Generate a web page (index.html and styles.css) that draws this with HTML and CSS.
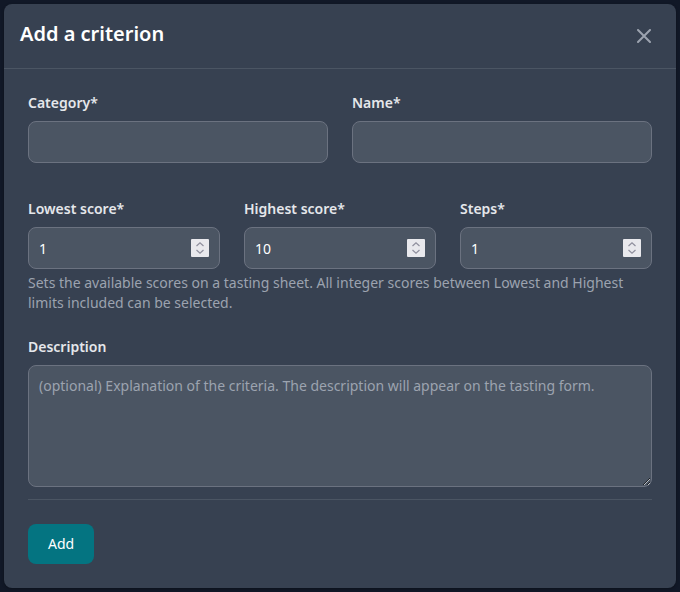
FILE: index.html
```html
<!DOCTYPE html>
<html lang="en">
<head>
<meta charset="utf-8">
<title>Add a criterion</title>
<link rel="stylesheet" href="styles.css">
</head>
<body>
<div class="modal">
  <div class="modal-header">
    <h3 class="modal-title">Add a criterion</h3>
    <button class="close-btn" type="button" aria-label="Close">
      <svg width="14" height="14" viewBox="0 0 14 14" fill="none"><path d="M1 1l12 12M13 1L1 13" stroke="currentColor" stroke-width="2" stroke-linecap="round"/></svg>
    </button>
  </div>
  <form class="modal-body">
    <div class="grid-2">
      <div class="field">
        <label class="label">Category*</label>
        <input class="input" type="text">
      </div>
      <div class="field">
        <label class="label">Name*</label>
        <input class="input" type="text">
      </div>
    </div>
    <div class="grid-3">
      <div class="field">
        <label class="label">Lowest score*</label>
        <div class="num-wrap">
          <input class="input" type="number" value="1">
          <svg class="spin" width="18" height="18" viewBox="0 0 18 18"><rect width="18" height="18" rx="1" fill="#e9e9ed"/><path d="M5.5 7L9 3.8L12.5 7M5.5 11L9 14.2L12.5 11" fill="none" stroke="#8f8f9d" stroke-width="1.2"/></svg>
        </div>
      </div>
      <div class="field">
        <label class="label">Highest score*</label>
        <div class="num-wrap">
          <input class="input" type="number" value="10">
          <svg class="spin" width="18" height="18" viewBox="0 0 18 18"><rect width="18" height="18" rx="1" fill="#e9e9ed"/><path d="M5.5 7L9 3.8L12.5 7M5.5 11L9 14.2L12.5 11" fill="none" stroke="#8f8f9d" stroke-width="1.2"/></svg>
        </div>
      </div>
      <div class="field">
        <label class="label">Steps*</label>
        <div class="num-wrap">
          <input class="input" type="number" value="1">
          <svg class="spin" width="18" height="18" viewBox="0 0 18 18"><rect width="18" height="18" rx="1" fill="#e9e9ed"/><path d="M5.5 7L9 3.8L12.5 7M5.5 11L9 14.2L12.5 11" fill="none" stroke="#8f8f9d" stroke-width="1.2"/></svg>
        </div>
      </div>
    </div>
    <p class="help">Sets the available scores on a tasting sheet. All integer scores between Lowest and Highest limits included can be selected.</p>
    <div class="field desc">
      <label class="label">Description</label>
      <textarea class="input textarea" rows="5" placeholder="(optional) Explanation of the criteria. The description will appear on the tasting form."></textarea>
    </div>
    <hr class="divider">
    <button class="btn" type="button">Add</button>
  </form>
</div>
</body>
</html>
```
FILE: styles.css
```css
html, body {
  margin: 0;
  padding: 0;
  background: #111827;
  font-family: "Noto Sans", "Open Sans", sans-serif;
}
* { box-sizing: border-box; }
.modal {
  margin: 4px;
  width: 672px;
  height: 584px;
  background: #374151;
  border-radius: 8px;
  box-shadow: 0 1px 3px rgba(0,0,0,0.3);
}
.modal-header {
  display: flex;
  align-items: center;
  justify-content: space-between;
  padding: 16px;
  border-bottom: 1px solid #4b5563;
}
.modal-title {
  margin: 0 0 4px;
  font-size: 20px;
  line-height: 28px;
  font-weight: 600;
  color: #ffffff;
}
.close-btn {
  width: 32px;
  height: 32px;
  display: inline-flex;
  align-items: center;
  justify-content: center;
  background: transparent;
  border: 0;
  border-radius: 8px;
  color: #9ca3af;
  padding: 0;
  margin-right: 0;
}
.modal-body {
  padding: 24px;
  margin: 0;
}
.grid-2 {
  display: grid;
  grid-template-columns: 1fr 1fr;
  gap: 24px;
  margin-bottom: 36px;
}
.grid-3 {
  display: grid;
  grid-template-columns: 1fr 1fr 1fr;
  gap: 24px;
}
.field {
  display: flex;
  flex-direction: column;
}
.label {
  display: block;
  margin-bottom: 8px;
  font-size: 14px;
  line-height: 20px;
  font-weight: 600;
  color: #e5e7eb;
}
.input {
  display: block;
  width: 100%;
  height: 42px;
  padding: 10px;
  background: #4b5563;
  border: 1px solid #6b7280;
  border-radius: 8px;
  color: #ffffff;
  font-family: inherit;
  font-size: 14px;
  line-height: 20px;
  outline: none;
}
.input[type=number] {
  -moz-appearance: textfield;
  padding-right: 36px;
}
.input::-webkit-inner-spin-button,
.input::-webkit-outer-spin-button {
  -webkit-appearance: none;
  margin: 0;
}
.num-wrap {
  position: relative;
}
.spin {
  position: absolute;
  right: 11px;
  top: 12px;
  display: block;
}
.input::placeholder {
  color: #9ca3af;
}
.help {
  margin: 4px 0 0;
  font-size: 14px;
  line-height: 20px;
  color: #9ca3af;
}
.desc {
  margin-top: 24px;
}
.textarea {
  height: 122px;
  resize: vertical;
}
.divider {
  margin: 12px 0 24px;
  border: 0;
  border-top: 1px solid #4b5563;
  height: 0;
}
.btn {
  display: inline-block;
  height: 40px;
  padding: 0 20px;
  background: #047481;
  color: #ffffff;
  border: 0;
  border-radius: 8px;
  font-family: inherit;
  font-size: 14px;
  font-weight: 400;
  line-height: 20px;
}
```
